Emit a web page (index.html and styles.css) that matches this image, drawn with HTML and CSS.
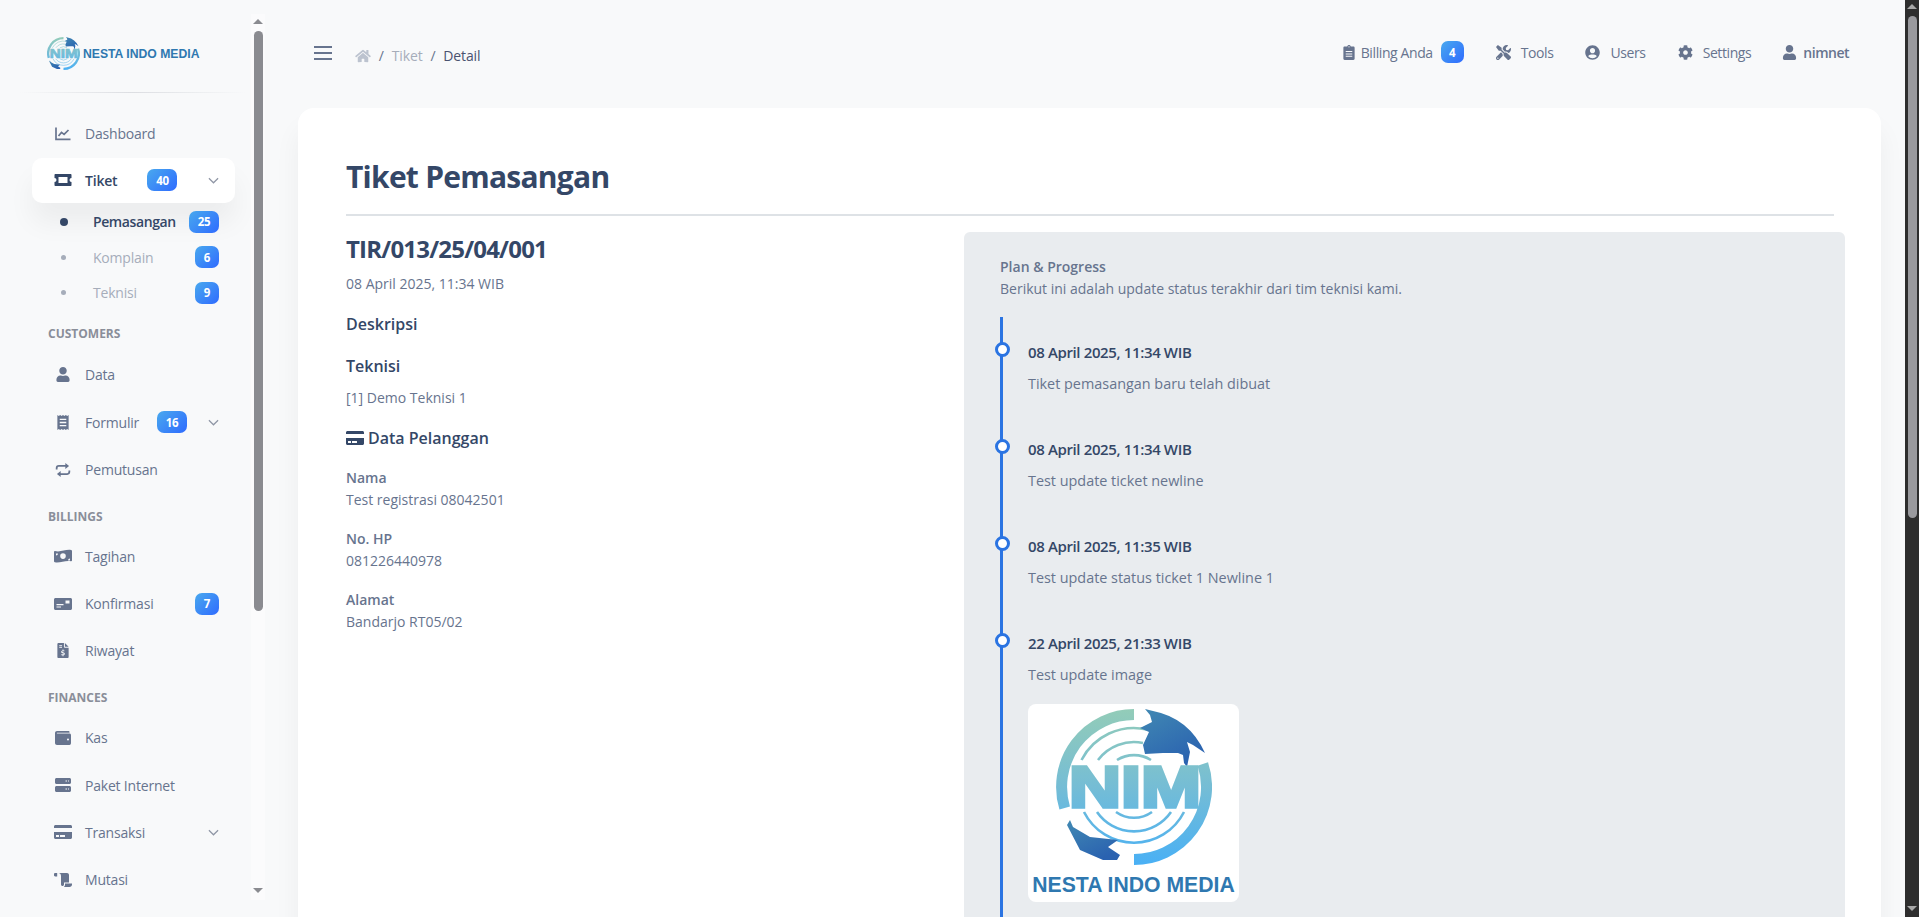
FILE: index.html
```html
<!DOCTYPE html>
<html lang="id">
<head>
  <meta charset="UTF-8" />
  <meta name="viewport" content="width=device-width, initial-scale=1" />
  <title>Tiket Pemasangan</title>
  <link rel="stylesheet" href="styles.css">
</head>
<body>
  <!-- ikon dan logo dipakai ulang lewat <use> -->
  <svg class="sprite" xmlns="http://www.w3.org/2000/svg">
    <defs>
      <linearGradient id="nim-ring" gradientUnits="userSpaceOnUse" x1="0" y1="5" x2="0" y2="161">
        <stop offset="0" stop-color="#93ccb8" />
        <stop offset="0.5" stop-color="#75bdd5" />
        <stop offset="1" stop-color="#49b0f5" />
      </linearGradient>
      <linearGradient id="nim-land" x1="0" y1="0" x2="0.6" y2="1">
        <stop offset="0" stop-color="#4189b3" />
        <stop offset="1" stop-color="#2a62b0" />
      </linearGradient>
      <g id="nim-art">
        <g fill="none" stroke="url(#nim-ring)">
          <path stroke-width="11" d="M105 10.5A72.5 72.5 0 0 0 35.7 104" />
          <path stroke-width="11" d="M173.8 60A72.5 72.5 0 0 1 105 155.5" />
          <path stroke-width="2.6" d="M52.5 56A59 59 0 0 1 118 25.5M69 56A45 45 0 0 1 114 39M88 56A32 32 0 0 1 122 56" />
          <path stroke-width="2.6" d="M55 108A56 56 0 0 0 155 108M68 108A45 45 0 0 0 142 108M87 108A31 31 0 0 0 123 108" />
        </g>
        <path fill="url(#nim-land)" d="M116 5L124 7Q160 14 176 49L164 41L158 38L161 48L158 63L155 59L154 51L149 49L134 49L116 50L114 41L120 28L111 24L123 18L121 11Z" />
        <path fill="url(#nim-land)" d="M38 121L41 116L44 123L61 133L89 136L79 143L91 151L88 156L74 156L51 146Z" />
      </g>
    </defs>
    <symbol id="i-chart" viewBox="0 0 16 14"><path fill="none" stroke="currentColor" stroke-width="1.7" d="M1 .5v11.8h14.5M3.500 9l3-3.600 2.600 2L13.500 3" /></symbol>
    <symbol id="i-ticket" viewBox="0 0 18 13"><path fill="currentColor" fill-rule="evenodd" d="M1.500.5h15c.6 0 1 .4 1 1v3a2 2 0 0 0 0 4v3c0 .6-.4 1-1 1h-15c-.6 0-1-.4-1-1v-3a2 2 0 0 0 0-4v-3c0-.6.4-1 1-1zM4.500 3.500v6h9v-6z" /></symbol>
    <symbol id="i-user" viewBox="0 0 448 512"><path fill="currentColor" d="M224 256c70.7 0 128-57.3 128-128S294.7 0 224 0 96 57.3 96 128s57.3 128 128 128zm89.6 32h-16.7c-22.2 10.2-46.9 16-72.9 16s-50.6-5.8-72.9-16h-16.7C60.2 288 0 348.2 0 422.4V464c0 26.5 21.5 48 48 48h352c26.5 0 48-21.5 48-48v-41.6c0-74.2-60.2-134.4-134.4-134.4z" /></symbol>
    <symbol id="i-receipt" viewBox="0 0 12 16"><path fill="currentColor" fill-rule="evenodd" d="M0 0l1.500 1L3 0l1.500 1L6 0l1.500 1L9 0l1.500 1L12 0v16l-1.500-1L9 16l-1.500-1L6 16l-1.500-1L3 16l-1.500-1L0 16zM2.500 4v1.400h7V4zm0 3.300v1.400h7V7.300zm0 3.300V12h7v-1.400z" /></symbol>
    <symbol id="i-repeat" viewBox="0 0 16 15"><path fill="none" stroke="currentColor" stroke-width="1.9" d="M1.200 7V5.500c0-1.300 1-2.300 2.300-2.300H13M14.800 8v1.500c0 1.300-1 2.300-2.300 2.300H3" /><path fill="currentColor" d="M10.500 0l4 3.200-4 3.200zM5.500 8.600l-4 3.200 4 3.200z" /></symbol>
    <symbol id="i-money" viewBox="0 0 18 13"><path fill="currentColor" fill-rule="evenodd" d="M1 1.500C6 3.200 12-.5 17 .5c.6.100 1 .5 1 1v9.500c0 .5-.5.9-1 .8-5-1.500-11 2-16 1-.6-.1-1-.5-1-1V2.300c0-.5.5-.9 1-.8zM9 3.800a2.800 2.800 0 1 0 0 5.600 2.800 2.800 0 0 0 0-5.600zM2 4v2a2 2 0 0 0 2-2zm14 5a2 2 0 0 0-2 2h2z" /></symbol>
    <symbol id="i-idcard" viewBox="0 0 18 12"><path fill="currentColor" fill-rule="evenodd" d="M1.500 0h15c.8 0 1.500.7 1.500 1.500v9c0 .8-.7 1.500-1.500 1.500h-15C.7 12 0 11.300 0 10.500v-9C0 .7.700 0 1.500 0zM2.500 6v1.300h7V6zm0 2.500v1h4.500v-1zM11.500 2.500v3H15.500v-3z" /></symbol>
    <symbol id="i-invoice" viewBox="0 0 12 16"><path fill="currentColor" fill-rule="evenodd" d="M1.200 0H7v4c0 .6.400 1 1 1h4v9.800c0 .7-.5 1.200-1.200 1.200H1.200C.5 16 0 15.500 0 14.800V1.200C0 .5.500 0 1.200 0zM8 0l4 4H8zM2 2v1h3V2zm0 2v1h3V4zm3.500 3v.9c-.8.100-1.500.7-1.500 1.500 0 .8.600 1.300 1.300 1.500l1.200.3c.2.100.3.200.3.400 0 .2-.2.400-.5.400H4.200v1h1.300v1h1v-1c.9-.1 1.500-.7 1.500-1.500 0-.8-.5-1.300-1.200-1.500l-1.300-.4c-.2 0-.3-.2-.3-.3 0-.2.200-.4.500-.4h1.800V8H6.500V7z" /></symbol>
    <symbol id="i-wallet" viewBox="0 0 16 14"><path fill="currentColor" fill-rule="evenodd" d="M2 0h11.500c.6 0 1 .4 1 1v.800H2.200c-.4 0-.4.800 0 .800H14.500c.8 0 1.500.7 1.500 1.500v8C16 13.300 15.300 14 14.500 14H2c-1.100 0-2-.9-2-2V2C0 .9.900 0 2 0zm11 7.500a1 1 0 1 0 0 2 1 1 0 0 0 0-2z" /></symbol>
    <symbol id="i-server" viewBox="0 0 16 14"><path fill="currentColor" fill-rule="evenodd" d="M1.500 0h13c.8 0 1.500.7 1.500 1.500v3c0 .8-.7 1.500-1.500 1.500h-13C.7 6 0 5.300 0 4.500v-3C0 .7.700 0 1.500 0zm9 2.500v1H12v-1zm2.500 0v1h1v-1zM1.500 8h13c.8 0 1.500.7 1.500 1.500v3c0 .8-.7 1.500-1.500 1.500h-13C.7 14 0 13.300 0 12.500v-3C0 8.700.700 8 1.500 8zm9 2.500v1H12v-1zm2.500 0v1h1v-1z" /></symbol>
    <symbol id="i-card" viewBox="0 32 576 448"><path fill="currentColor" d="M0 432c0 26.500 21.500 48 48 48h480c26.500 0 48-21.500 48-48V256H0v176zm192-68c0-6.600 5.400-12 12-12h136c6.600 0 12 5.400 12 12v40c0 6.600-5.400 12-12 12H204c-6.600 0-12-5.400-12-12v-40zm-128 0c0-6.600 5.400-12 12-12h72c6.600 0 12 5.400 12 12v40c0 6.600-5.400 12-12 12H76c-6.600 0-12-5.400-12-12v-40zM576 80v48H0V80c0-26.500 21.500-48 48-48h480c26.500 0 48 21.500 48 48z" /></symbol>
    <symbol id="i-scroll" viewBox="0 0 18 14"><path fill="currentColor" fill-rule="evenodd" d="M0 1.200C0 .5.500 0 1.200 0h2v3.500H1.200C.5 3.500 0 3 0 2.300zM4.500 0H13c1.100 0 2 .9 2 2v7.500h-5v2c0 .8-.7 1.500-1.500 1.500S7 12.300 7 11.500V3C7 1.300 6 0 4.500 0zM11 10.500h7v1c0 1.400-1.100 2.500-2.500 2.500H9.800c.7-.5 1.200-1.400 1.200-2.300z" /></symbol>
    <symbol id="i-home" viewBox="0 0 576 512"><path fill="currentColor" d="M280.370 148.260L96 300.110V464a16 16 0 0 0 16 16l112.060-.29a16 16 0 0 0 15.920-16V368a16 16 0 0 1 16-16h64a16 16 0 0 1 16 16v95.640a16 16 0 0 0 16 16.050L464 480a16 16 0 0 0 16-16V300L295.670 148.260a12.190 12.190 0 0 0-15.300 0zM571.600 251.470L488 182.560V44.050a12 12 0 0 0-12-12h-56a12 12 0 0 0-12 12v72.610L318.470 43a48 48 0 0 0-61 0L4.340 251.470a12 12 0 0 0-1.600 16.900l25.500 31A12 12 0 0 0 45.150 301l235.220-193.740a12.190 12.190 0 0 1 15.300 0L530.900 301a12 12 0 0 0 16.900-1.600l25.500-31a12 12 0 0 0-1.700-16.930z" /></symbol>
    <symbol id="i-clipboard" viewBox="0 0 12 16"><path fill="currentColor" fill-rule="evenodd" d="M6 0c.9 0 1.600.6 1.900 1.500h2.800c.7 0 1.300.6 1.300 1.300v11.900c0 .7-.6 1.300-1.300 1.300H1.300C.6 16 0 15.400 0 14.700V2.800c0-.7.600-1.300 1.300-1.300h2.800C4.400.6 5.100 0 6 0zM6 1.200a.7.7 0 1 0 0 1.400.7.700 0 0 0 0-1.400zM2.500 6.500v1h7v-1zm0 2.500v1h7V9zm0 2.500v1h7v-1z" /></symbol>
    <symbol id="i-tools" viewBox="0 0 512 512"><path fill="currentColor" d="M501.100 395.700L384 278.600c-23.100-23.100-57.600-27.600-85.400-13.900L192 158.100V96L64 0 0 64l96 128h62.100l106.600 106.600c-13.600 27.800-9.200 62.300 13.900 85.400l117.100 117.100c14.600 14.600 38.200 14.600 52.700 0l52.700-52.700c14.500-14.600 14.500-38.200 0-52.700zM331.700 225c28.300 0 54.900 11 74.900 31l19.400 19.400c15.800-6.900 30.800-16.500 43.800-29.500 37.100-37.100 49.700-89.300 37.900-136.700-2.200-9-13.500-12.100-20.100-5.500l-74.400 74.400-67.900-11.300L334 98.900l74.400-74.400c6.600-6.600 3.400-17.900-5.700-20.200-47.400-11.700-99.600.9-136.600 37.900-28.500 28.500-41.900 66.100-41.200 103.600l82.100 82.100c8.100-1.900 16.500-2.900 24.700-2.900zm-103.900 82l-56.700-56.700L18.700 402.800c-25 25-25 65.500 0 90.500s65.500 25 90.500 0l123.600-123.600c-7.600-19.900-9.900-41.600-5-62.700zM64 472c-13.200 0-24-10.800-24-24 0-13.300 10.700-24 24-24s24 10.700 24 24c0 13.200-10.700 24-24 24z" /></symbol>
    <symbol id="i-usercircle" viewBox="0 0 496 512"><path fill="currentColor" d="M248 8C111 8 0 119 0 256s111 248 248 248 248-111 248-248S385 8 248 8zm0 96c48.600 0 88 39.400 88 88s-39.400 88-88 88-88-39.400-88-88 39.400-88 88-88zm0 344c-58.700 0-111.300-26.600-146.500-68.200 18.800-35.400 55.600-59.800 98.500-59.800 2.400 0 4.800.4 7.100 1.100 13 4.200 26.600 6.900 40.900 6.900 14.300 0 28-2.700 40.900-6.900 2.300-.7 4.700-1.100 7.100-1.100 42.900 0 79.700 24.400 98.500 59.800C359.300 421.400 306.700 448 248 448z" /></symbol>
    <symbol id="i-cog" viewBox="0 0 512 512"><path fill="currentColor" d="M487.400 315.700l-42.600-24.600c4.300-23.200 4.300-47 0-70.200l42.600-24.600c4.900-2.800 7.100-8.600 5.500-14-11.100-35.600-30-67.800-54.700-94.600-3.800-4.100-10-5.100-14.800-2.300L380.800 110c-17.900-15.400-38.500-27.300-60.800-35.100V25.800c0-5.600-3.900-10.500-9.400-11.700-36.700-8.200-74.300-7.800-109.200 0-5.500 1.200-9.400 6.100-9.400 11.700V75c-22.200 7.900-42.800 19.800-60.800 35.100L88.700 85.500c-4.900-2.800-11-1.900-14.800 2.300-24.700 26.700-43.600 58.900-54.700 94.600-1.700 5.400.6 11.200 5.500 14L67.300 221c-4.300 23.200-4.300 47 0 70.200l-42.600 24.600c-4.900 2.800-7.100 8.600-5.500 14 11.100 35.600 30 67.800 54.700 94.600 3.800 4.100 10 5.100 14.800 2.300l42.600-24.600c17.900 15.400 38.500 27.300 60.800 35.100v49.200c0 5.600 3.900 10.500 9.400 11.700 36.700 8.200 74.300 7.800 109.200 0 5.500-1.200 9.400-6.100 9.400-11.700v-49.200c22.200-7.900 42.800-19.800 60.800-35.100l42.600 24.600c4.900 2.800 11 1.900 14.800-2.300 24.700-26.700 43.600-58.900 54.700-94.600 1.500-5.500-.7-11.300-5.600-14.100zM256 336c-44.100 0-80-35.900-80-80s35.900-80 80-80 80 35.900 80 80-35.900 80-80 80z" /></symbol>
    <symbol id="i-chevron" viewBox="0 0 12 7"><path fill="none" stroke="currentColor" stroke-width="1.300" d="M1 1l5 5 5-5" /></symbol>
  </svg>

  <aside class="sidebar">
    <div class="sidebar-body">
      <a class="brand">
        <svg class="brand-logo" viewBox="27 5 156 156">
          <use href="#nim-art" />
          <text class="logo-nim" x="40" y="103" textLength="132" lengthAdjust="spacingAndGlyphs">NIM</text>
        </svg>
        <span class="brand-text">NESTA INDO MEDIA</span>
      </a>
      <div class="brand-line"></div>

      <ul class="nav">
        <li class="nav-item"><svg class="nav-icon"><use href="#i-chart" /></svg><span>Dashboard</span></li>
        <li class="nav-item active">
          <svg class="nav-icon i-wide"><use href="#i-ticket" /></svg><span>Tiket</span>
          <span class="badge badge-wide gap-lg">40</span>
          <svg class="chevron"><use href="#i-chevron" /></svg>
        </li>
      </ul>
      <ul class="subnav">
        <li class="sub-item current"><i class="dot"></i><span>Pemasangan</span><span class="badge badge-wide">25</span></li>
        <li class="sub-item"><i class="dot"></i><span>Komplain</span><span class="badge">6</span></li>
        <li class="sub-item"><i class="dot"></i><span>Teknisi</span><span class="badge">9</span></li>
      </ul>

      <div class="nav-label first">CUSTOMERS</div>
      <ul class="nav">
        <li class="nav-item"><svg class="nav-icon i-narrow"><use href="#i-user" /></svg><span>Data</span></li>
        <li class="nav-item">
          <svg class="nav-icon i-narrow"><use href="#i-receipt" /></svg><span>Formulir</span>
          <span class="badge badge-wide gap-sm">16</span>
          <svg class="chevron"><use href="#i-chevron" /></svg>
        </li>
        <li class="nav-item"><svg class="nav-icon"><use href="#i-repeat" /></svg><span>Pemutusan</span></li>
      </ul>

      <div class="nav-label">BILLINGS</div>
      <ul class="nav">
        <li class="nav-item"><svg class="nav-icon i-wide"><use href="#i-money" /></svg><span>Tagihan</span></li>
        <li class="nav-item"><svg class="nav-icon i-wide"><use href="#i-idcard" /></svg><span>Konfirmasi</span><span class="badge push">7</span></li>
        <li class="nav-item"><svg class="nav-icon i-narrow"><use href="#i-invoice" /></svg><span>Riwayat</span></li>
      </ul>

      <div class="nav-label">FINANCES</div>
      <ul class="nav">
        <li class="nav-item"><svg class="nav-icon"><use href="#i-wallet" /></svg><span>Kas</span></li>
        <li class="nav-item"><svg class="nav-icon"><use href="#i-server" /></svg><span>Paket Internet</span></li>
        <li class="nav-item">
          <svg class="nav-icon i-wide"><use href="#i-card" /></svg><span>Transaksi</span>
          <svg class="chevron"><use href="#i-chevron" /></svg>
        </li>
        <li class="nav-item"><svg class="nav-icon i-wide"><use href="#i-scroll" /></svg><span>Mutasi</span></li>
      </ul>
    </div>
    <div class="scrollbar scrollbar-side">
      <i class="arrow-up"></i>
      <i class="thumb"></i>
      <i class="arrow-down"></i>
    </div>
  </aside>

  <main class="main">
    <header class="topbar">
      <button class="burger" type="button"><i></i><i></i><i></i></button>
      <nav class="crumbs">
        <svg class="crumb-home"><use href="#i-home" /></svg>
        <span class="sep">/</span>
        <span class="crumb-link">Tiket</span>
        <span class="sep">/</span>
        <span class="crumb-now">Detail</span>
      </nav>
      <ul class="top-menu">
        <li class="top-item tight"><svg class="top-icon i-clip"><use href="#i-clipboard" /></svg><span>Billing Anda</span><span class="badge badge-top">4</span></li>
        <li class="top-item"><svg class="top-icon"><use href="#i-tools" /></svg><span>Tools</span></li>
        <li class="top-item"><svg class="top-icon"><use href="#i-usercircle" /></svg><span>Users</span></li>
        <li class="top-item"><svg class="top-icon"><use href="#i-cog" /></svg><span>Settings</span></li>
        <li class="top-item tight"><svg class="top-icon"><use href="#i-user" /></svg><strong>nimnet</strong></li>
      </ul>
    </header>

    <section class="card">
      <h3 class="card-title">Tiket Pemasangan</h3>
      <hr class="card-line">

      <div class="detail">
        <div class="detail-left">
          <h4 class="ticket-no">TIR/013/25/04/001</h4>
          <p class="ticket-date">08 April 2025, 11:34 WIB</p>
          <h6 class="sub-title">Deskripsi</h6>
          <h6 class="sub-title">Teknisi</h6>
          <p class="tech">[1] Demo Teknisi 1</p>
          <h6 class="sub-title customer"><svg class="customer-icon"><use href="#i-card" /></svg>Data Pelanggan</h6>
          <div class="field">
            <b>Nama</b>
            <span>Test registrasi 08042501</span>
          </div>
          <div class="field">
            <b>No. HP</b>
            <span>081226440978</span>
          </div>
          <div class="field">
            <b>Alamat</b>
            <span>Bandarjo RT05/02</span>
          </div>
        </div>

        <div class="progress">
          <b class="progress-title">Plan &amp; Progress</b>
          <p class="progress-sub">Berikut ini adalah update status terakhir dari tim teknisi kami.</p>

          <ul class="timeline">
            <li class="step">
              <i class="step-dot"></i>
              <h6 class="step-date">08 April 2025, 11:34 WIB</h6>
              <p class="step-text">Tiket pemasangan baru telah dibuat</p>
            </li>
            <li class="step">
              <i class="step-dot"></i>
              <h6 class="step-date">08 April 2025, 11:34 WIB</h6>
              <p class="step-text">Test update ticket newline</p>
            </li>
            <li class="step">
              <i class="step-dot"></i>
              <h6 class="step-date">08 April 2025, 11:35 WIB</h6>
              <p class="step-text">Test update status ticket 1 Newline 1</p>
            </li>
            <li class="step">
              <i class="step-dot"></i>
              <h6 class="step-date">22 April 2025, 21:33 WIB</h6>
              <p class="step-text">Test update image</p>
              <div class="step-image">
                <svg class="step-logo" viewBox="27 5 156 156">
                  <use href="#nim-art" />
                  <text class="logo-nim" x="40" y="103" textLength="132" lengthAdjust="spacingAndGlyphs">NIM</text>
                </svg>
                <span class="step-logo-text">NESTA INDO MEDIA</span>
              </div>
            </li>
          </ul>
        </div>
      </div>
    </section>
  </main>

  <div class="scrollbar scrollbar-page">
    <i class="arrow-up"></i>
    <i class="thumb"></i>
    <i class="arrow-down"></i>
  </div>
</body>
</html>
```

FILE: styles.css
```css
* {
  box-sizing: border-box;
}

html, body {
  height: 100%;
  margin: 0;
  overflow: hidden;
}

body {
  display: flex;
  font-family: "Open Sans", sans-serif;
  font-size: 14px;
  color: #67748e;
  background-color: #f8f9fa;
}

ul {
  list-style: none;
  margin: 0;
  padding: 0;
}

h3, h4, h6, p {
  margin: 0;
}

.sprite {
  position: absolute;
  width: 0;
  height: 0;
}

/* sidebar */
.sidebar {
  flex: 0 0 266px;
  display: flex;
  height: 886px;
  margin-top: 14px;
}

.sidebar-body {
  flex: 0 0 251px;
  overflow: hidden;
}

.brand {
  display: flex;
  align-items: center;
  height: 33px;
  margin: 23px 0 22px 47px;
}

.brand-logo {
  flex: none;
  width: 33px;
  height: 33px;
}

.brand-text {
  margin-left: 3px;
  font-family: "Liberation Sans", sans-serif;
  font-size: 12.2px;
  font-weight: 700;
  color: #2f78b0;
  white-space: nowrap;
}

.logo-nim {
  font-family: "Liberation Sans", sans-serif;
  font-size: 58px;
  font-weight: 700;
  fill: url(#nim-ring);
  stroke: url(#nim-ring);
  stroke-width: 3.5px;
}

.brand-line {
  height: 1px;
  margin: 0 6px 17px 20px;
  background: linear-gradient(90deg, transparent, #dcdee2 50%, transparent);
}

.nav {
  margin: 0 16px 0 32px;
}

.nav-item {
  display: flex;
  align-items: center;
  height: 47.3px;
  padding: 0 16px 0 23px;
  letter-spacing: -0.2px;
}

.nav-item.active {
  height: 45px;
  margin: 1px 0 1.3px;
  padding-bottom: 1px;
  color: #344767;
  font-weight: 600;
  background: #fff;
  border-radius: 10px;
  box-shadow: 0 20px 27px rgba(0, 0, 0, 0.05);
}

.nav-icon {
  flex: 0 0 16px;
  width: 16px;
  height: 14px;
  margin-right: 14px;
}

.i-narrow {
  height: 15px;
}

.i-wide {
  flex-basis: 18px;
  width: 18px;
  margin: 0 13px 0 -1px;
}

.chevron {
  flex: none;
  width: 11px;
  height: 7px;
  margin-left: auto;
  color: #8f96a5;
}

.badge {
  flex: none;
  display: flex;
  align-items: center;
  justify-content: center;
  width: 24px;
  height: 22px;
  font-size: 11.5px;
  font-weight: 700;
  letter-spacing: -0.3px;
  color: #fff;
  background: linear-gradient(135deg, #49a9ee, #2f6bff);
  border-radius: 7px;
}

.badge-wide {
  width: 30px;
}

.gap-lg {
  margin-left: 30px;
}

.gap-sm {
  margin-left: 18px;
}

.push {
  margin-left: auto;
}

.subnav {
  margin: -0.8px 32px 0 60px;
}

.sub-item {
  display: flex;
  align-items: center;
  height: 35.5px;
  color: #a6adba;
  letter-spacing: -0.2px;
}

.sub-item .badge {
  margin-left: auto;
  letter-spacing: -0.3px;
}

.sub-item.current {
  color: #344767;
  font-weight: 600;
  letter-spacing: -0.4px;
}

.dot {
  flex: none;
  width: 5px;
  height: 5px;
  margin: 0 27px 0 1px;
  background: #a6adba;
  border-radius: 50%;
}

.current .dot {
  width: 8px;
  height: 8px;
  margin: 0 25px 0 0;
  background: #344767;
}

.nav-label {
  height: 39.5px;
  margin-left: 48px;
  padding-top: 8.5px;
  line-height: 29px;
  font-size: 12px;
  font-weight: 700;
  color: #8a8e99;
}

.nav-label.first {
  height: 41px;
  padding-top: 9px;
}

/* scrollbar */
.scrollbar {
  flex: 0 0 14px;
  display: flex;
  flex-direction: column;
  align-items: center;
}

.scrollbar-side {
  background: #fbfbfc;
}

.scrollbar-page {
  background: #2e2e2e;
}

.thumb {
  width: 9px;
  border-radius: 5px;
}

.scrollbar-side .thumb {
  height: 580px;
  margin-top: 7px;
  background: #8a8b90;
}

.scrollbar-page .thumb {
  height: 502px;
  margin-top: 7px;
  background: #9a9a9e;
}

.arrow-up,
.arrow-down {
  width: 0;
  height: 0;
  border-left: 5px solid transparent;
  border-right: 5px solid transparent;
}

.arrow-up {
  margin-top: 5px;
  border-bottom: 5px solid #8a8b90;
}

.arrow-down {
  margin-top: auto;
  margin-bottom: 7px;
  border-top: 5px solid #8a8b90;
}

.scrollbar-page .arrow-up {
  margin-top: 4px;
  border-bottom-color: #a8a8a8;
}

.scrollbar-page .arrow-down {
  margin-bottom: 6px;
  border-top-color: #a8a8a8;
}

/* konten */
.main {
  flex: 1;
  min-width: 0;
  padding: 0 24px 0 32px;
  overflow: hidden;
}

.topbar {
  display: flex;
  align-items: center;
  height: 108px;
  padding: 0 32px 4px 16px;
}

.burger {
  display: flex;
  flex-direction: column;
  gap: 4px;
  width: 18px;
  padding: 0;
  margin: 2px 24px 0 0;
  border: 0;
  background: none;
}

.burger i {
  height: 2px;
  background: #67748e;
}

.crumbs {
  display: flex;
  align-items: center;
  gap: 7.8px;
  padding-top: 7px;
  letter-spacing: -0.1px;
}

.crumb-home {
  width: 16px;
  height: 14px;
  margin-left: -1px;
  color: #bcc3cf;
}

.crumb-link {
  color: #a6adba;
}

.crumb-now {
  color: #4a5270;
}

.sep {
  color: #67748e;
}

.top-menu {
  display: flex;
  align-items: center;
  gap: 32px;
  margin-left: auto;
}

.top-item {
  display: flex;
  align-items: center;
  gap: 10px;
  letter-spacing: -0.4px;
}

.top-item.tight {
  gap: 6px;
}

.top-item:last-child {
  margin-left: -1px;
}

.top-item strong {
  font-weight: 600;
  letter-spacing: -0.5px;
}

.top-icon {
  width: 15px;
  height: 15px;
}

.i-clip {
  width: 12px;
}

.badge-top {
  width: 23px;
  margin-left: 2px;
}

.card {
  height: 1400px;
  padding: 49px 47px 0 48px;
  background: #fff;
  border-radius: 16px;
  box-shadow: 0 20px 27px rgba(0, 0, 0, 0.05);
}

.card-title {
  font-size: 30px;
  line-height: 40px;
  font-weight: 700;
  letter-spacing: -0.75px;
  color: #344767;
}

.card-line {
  height: 2px;
  margin: 17px 0 16px;
  border: 0;
  background: #dee2e6;
}

.detail {
  display: grid;
  grid-template-columns: 618px 881px;
}

.ticket-no {
  font-size: 24px;
  line-height: 34px;
  font-weight: 700;
  letter-spacing: -0.8px;
  color: #344767;
}

.ticket-date,
.tech,
.field span {
  font-size: 14px;
  line-height: 20px;
}

.ticket-date {
  margin-top: 8px;
}

.sub-title {
  margin-top: 18px;
  font-size: 16px;
  line-height: 24px;
  font-weight: 600;
  color: #344767;
}

.tech {
  margin-top: 10px;
}

.customer {
  display: flex;
  align-items: center;
  gap: 4px;
  margin-top: 17.8px;
}

.customer-icon {
  width: 18px;
  height: 14px;
}

.field {
  display: flex;
  flex-direction: column;
  gap: 2px;
  margin-top: 18.7px;
}

.field b {
  font-size: 14px;
  line-height: 20px;
  font-weight: 600;
}

.progress {
  height: 1200px;
  padding: 25px 36px 0;
  background: #e9ecef;
  border-radius: 6px;
}

.progress-title {
  display: block;
  font-size: 14px;
  line-height: 20px;
  font-weight: 600;
}

.progress-sub {
  margin-top: 2px;
  font-size: 14px;
  line-height: 20px;
}

.timeline {
  height: 1000px;
  margin-top: 18px;
  padding-top: 26px;
  border-left: 3px solid #2b74e2;
}

.step {
  position: relative;
  padding-left: 25px;
  margin-bottom: 46px;
}

.step-dot {
  position: absolute;
  left: -8px;
  top: 0;
  width: 15px;
  height: 15px;
  background: #fff;
  border: 3.5px solid #2b74e2;
  border-radius: 50%;
}

.step-date {
  margin-top: -1px;
  font-size: 15px;
  line-height: 20px;
  font-weight: 600;
  letter-spacing: -0.37px;
  color: #344767;
}

.step-text {
  margin-top: 12px;
  font-size: 14.4px;
  line-height: 20px;
}

.step-image {
  display: flex;
  flex-direction: column;
  align-items: center;
  width: 211px;
  height: 198px;
  margin-top: 19px;
  padding-top: 5px;
  background: #fff;
  border-radius: 8px;
}

.step-logo {
  flex: none;
  width: 156px;
  height: 156px;
}

.step-logo-text {
  margin-top: 7px;
  font-family: "Liberation Sans", sans-serif;
  font-size: 21.2px;
  line-height: 26px;
  font-weight: 700;
  color: #2f78b0;
  white-space: nowrap;
}
```
